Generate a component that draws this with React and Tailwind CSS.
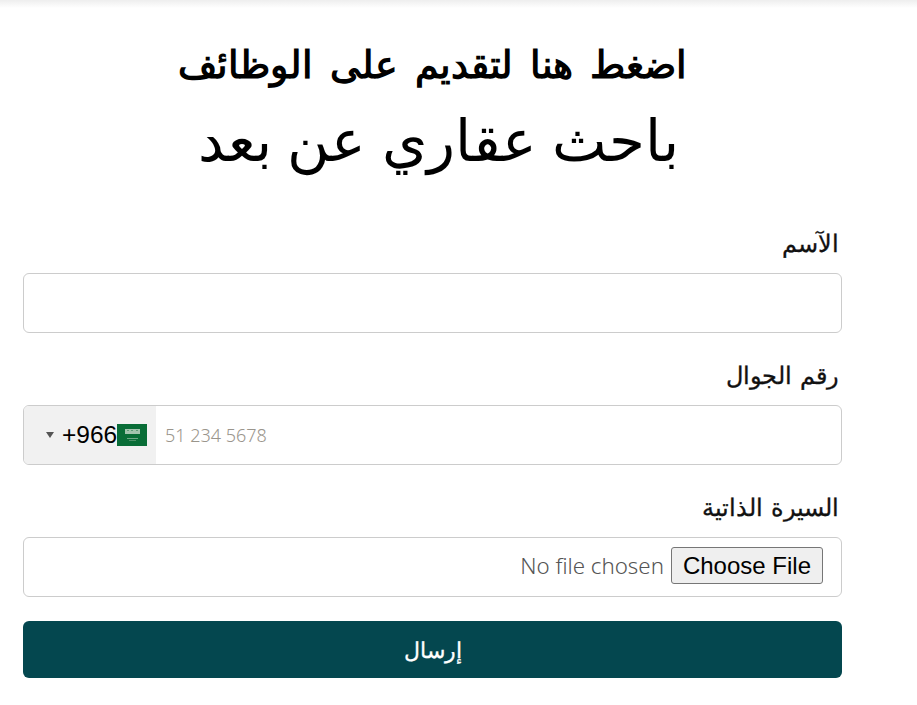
import React from 'react';

const Flag = () => (
  <svg width="30" height="22" viewBox="0 0 30 22" className="shrink-0">
    <rect width="30" height="22" fill="#096d37" />
    <rect x="8" y="5" width="15" height="5" fill="#a3c4ae" />
    <rect x="10" y="6" width="2" height="1" fill="#5f9c77" />
    <rect x="14" y="6" width="2" height="1" fill="#5f9c77" />
    <rect x="19" y="6" width="2" height="1" fill="#5f9c77" />
    <rect x="10" y="14" width="11" height="1" fill="#6fa686" />
    <rect x="12" y="16" width="7" height="1" fill="#4d9068" />
  </svg>
);

const Label = ({ children }) => (
  <label className="block text-[24px] leading-[33px] [word-spacing:2px] [-webkit-text-stroke:0.3px] text-[#111] pr-[3px] mb-[14px]">{children}</label>
);

export default function App() {
  return (
    <div dir="rtl" className="min-h-[705px] bg-white font-['Noto_Sans',sans-serif] text-black">
      <div className="h-[8px] bg-gradient-to-b from-[#eeeeee] to-white" />
      <div className="w-[819px] mr-[75px] pt-[30px]">
        <h2 className="text-center text-[38px] leading-[50px] font-bold [word-spacing:7px]">اضغط هنا لتقديم على الوظائف</h2>
        <h1 className="text-center text-[58.4px] leading-[102px] font-normal pl-[12px] mb-[36px]">باحث عقاري عن بعد</h1>

        <div className="mb-[25px]">
          <Label>الآسم</Label>
          <input type="text" className="block w-full h-[60px] border border-[#cccccc] rounded-[6px] bg-white" />
        </div>

        <div className="mb-[25px]">
          <Label>رقم الجوال</Label>
          <div dir="ltr" className="flex h-[60px] border border-[#cccccc] rounded-[6px] overflow-hidden">
            <div className="w-[132px] bg-[#f1f1f1] flex items-center pl-[22px]">
              <span className="w-0 h-0 border-l-[4px] border-r-[4px] border-t-[6px] border-l-transparent border-r-transparent border-t-[#555] mr-[8px]" />
              <span className="font-['Liberation_Sans',sans-serif] text-[24.5px]">+966</span>
              <Flag />
            </div>
            <input
              type="text"
              placeholder="51 234 5678"
              className="flex-1 pl-[9px] text-[18px] font-light outline-none placeholder:text-[#9a958c]"
            />
          </div>
        </div>

        <div className="mb-[24px]">
          <Label>السيرة الذاتية</Label>
          <div className="flex items-center h-[60px] border border-[#cccccc] rounded-[6px] pr-[18px]">
            <input
              type="file"
              className="w-full mb-[4px] text-[22.3px] font-light text-[#555] file:font-['Liberation_Sans',sans-serif] file:font-normal file:text-black file:text-[24px] file:bg-[#efefef] file:border file:border-[#767676] file:rounded-[3px] file:px-[11px] file:h-[37px] file:ml-[7px]"
            />
          </div>
        </div>

        <button className="block w-full h-[57px] bg-[#04474f] text-white text-[22px] [-webkit-text-stroke:0.3px] rounded-[6px]">إرسال</button>
      </div>
    </div>
  );
}
